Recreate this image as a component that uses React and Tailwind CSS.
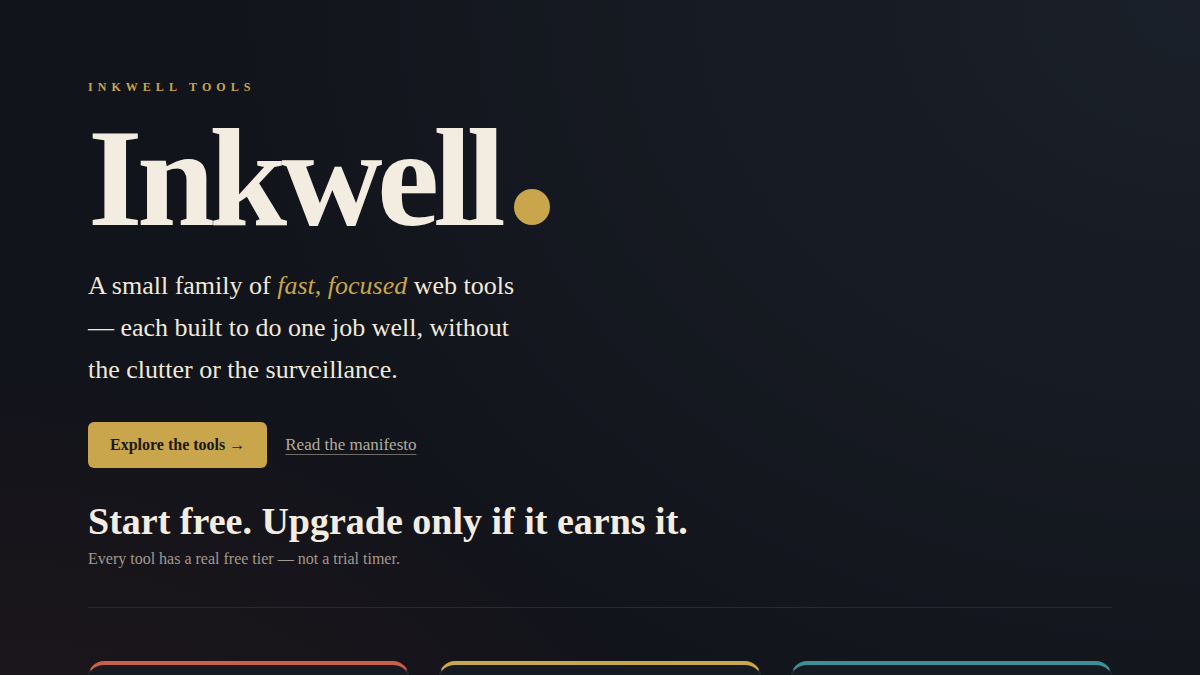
import React from 'react';

const tools = [
  { name: 'red', color: 'border-t-[#c8604a]' },
  { name: 'gold', color: 'border-t-[#c9a54c]' },
  { name: 'teal', color: 'border-t-[#3f8f9a]' },
];

const App = () => {
  return (
    <div className="min-h-screen bg-[#12141b] bg-[image:radial-gradient(ellipse_at_100%_0%,#1a2029_0%,transparent_60%),radial-gradient(ellipse_at_0%_100%,#22171a_0%,transparent_45%)] font-['Liberation_Serif',serif] overflow-hidden">
      <div className="max-w-[1024px] mx-auto pt-[81px] pb-20 ml-[88px]">
        <p className="text-[12px] font-bold tracking-[0.42em] text-[#c9a54c] leading-none">INKWELL TOOLS</p>

        <h1 className="mt-[29px] flex items-end text-[140px] leading-[0.8] font-bold tracking-[-0.04em] text-[#f3ece0]">
          <span>Inkwell</span>
          <span className="ml-[14px] mb-[9px] inline-block w-[36px] h-[36px] rounded-full bg-[#c9a54c]"></span>
        </h1>

        <p className="mt-[31px] text-[26px] leading-[42px] text-[#f0e9dc]">
          A small family of <em className="text-[#c9a54c]">fast, focused</em> web tools
          <br />
          — each built to do one job well, without
          <br />
          the clutter or the surveillance.
        </p>

        <div className="mt-[31px] flex items-center gap-[18px]">
          <button className="h-[46px] px-[22px] rounded-md bg-[#c9a54c] text-[16px] font-bold text-[#1b1813]">
            Explore the tools →
          </button>
          <a href="#" className="text-[17px] text-[#b3ab9f] underline decoration-[#6f6a63] underline-offset-4">
            Read the manifesto
          </a>
        </div>

        <h2 className="mt-[30px] text-[38px] leading-[46px] font-bold text-[#f3ece0]">
          Start free. Upgrade only if it earns it.
        </h2>
        <p className="mt-[3px] text-[16px] text-[#a19a90]">Every tool has a real free tier — not a trial timer.</p>

        <div className="mt-[36px] h-px bg-[#272a35]"></div>

        <div className="mt-[53px] grid grid-cols-3 gap-[30px]">
          {tools.map((t) => (
            <div
              key={t.name}
              className={`h-[220px] rounded-2xl border border-[#252934] border-t-4 ${t.color} bg-[#161a22]`}
            ></div>
          ))}
        </div>
      </div>
    </div>
  );
};

export default App;
